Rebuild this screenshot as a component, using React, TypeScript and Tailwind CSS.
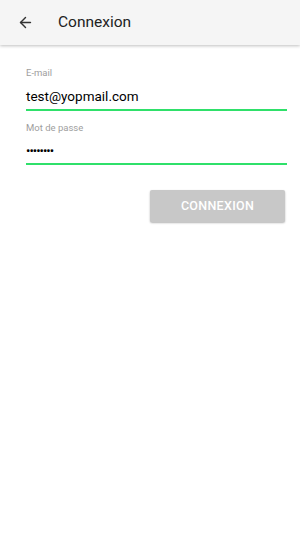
import { ArrowLeft } from "lucide-react";

export default function App() {
  return (
    <div className="min-h-[533px] w-[300px] bg-white font-['Roboto',sans-serif]">
      <header className="flex h-[45px] items-center bg-[#f5f5f5] shadow-[0_1px_3px_rgba(0,0,0,0.25)]">
        <ArrowLeft className="ml-[17px] h-[17px] w-[17px] text-[#333]" strokeWidth={2} />
        <h1 className="ml-[24px] text-[15.5px] font-normal text-[#222]">Connexion</h1>
      </header>

      <div className="px-[26px] pt-[22px]">
        <div className="mr-[-13px]">
          <label className="block text-[9.5px] leading-[12px] text-[#9e9e9e]">E-mail</label>
          <div className="mt-[9px] border-b-2 border-[#2fe06a] pb-[5px] text-[13.5px] leading-[16px] text-black">
            test@yopmail.com
          </div>
          <label className="mt-[11px] block text-[9.5px] leading-[12px] text-[#9e9e9e]">Mot de passe</label>
          <div className="mt-[9px] border-b-2 border-[#2fe06a] pb-[5px] text-[13px] leading-[15px] tracking-[-1px] text-black">
            ••••••••
          </div>
        </div>

        <div className="mt-[25px] flex justify-end">
          <button className="mr-[-11px] h-[32px] w-[135px] rounded-[2px] bg-[#c8c8c8] text-[12.5px] font-medium tracking-[0.3px] text-white shadow-[0_1px_2px_rgba(0,0,0,0.3)]">
            CONNEXION
          </button>
        </div>
      </div>
    </div>
  );
}
